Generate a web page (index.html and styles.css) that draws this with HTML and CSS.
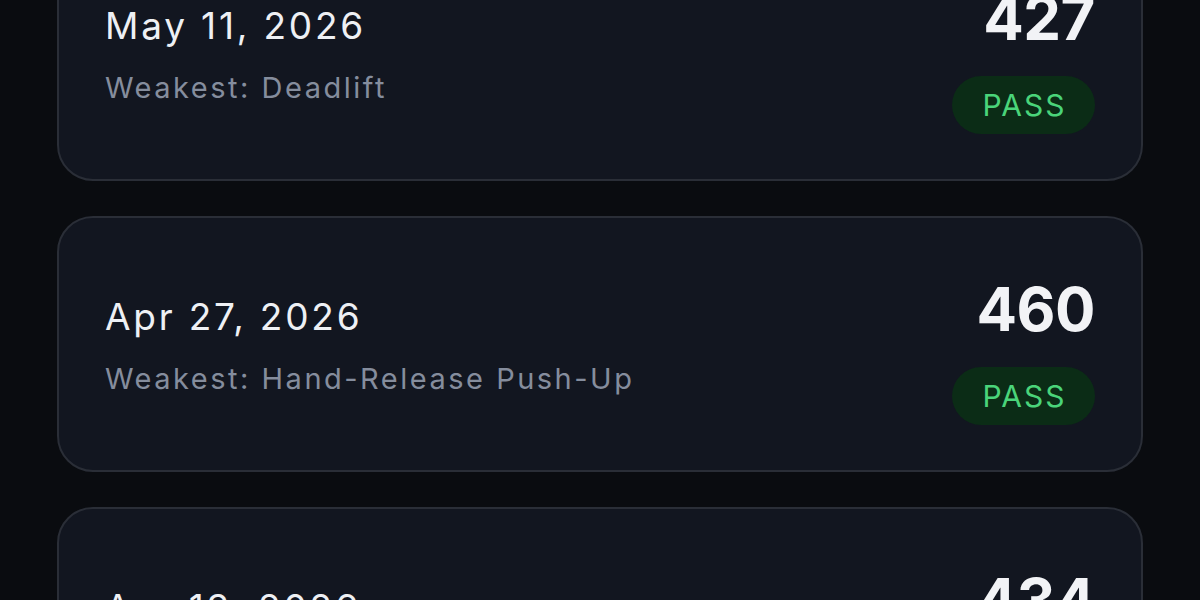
FILE: index.html
```html
<!DOCTYPE html>
<html lang="en">
<head>
<meta charset="utf-8">
<title>Test history</title>
<link rel="stylesheet" href="styles.css">
</head>
<body>
<main class="list">
  <section class="card">
    <div class="info">
      <div class="date">May 11, 2026</div>
      <div class="weak">Weakest: Deadlift</div>
    </div>
    <div class="result">
      <div class="score">427</div>
      <div class="pill">PASS</div>
    </div>
  </section>
  <section class="card">
    <div class="info">
      <div class="date">Apr 27, 2026</div>
      <div class="weak">Weakest: Hand-Release Push-Up</div>
    </div>
    <div class="result">
      <div class="score">460</div>
      <div class="pill">PASS</div>
    </div>
  </section>
  <section class="card">
    <div class="info">
      <div class="date">Apr 13, 2026</div>
      <div class="weak">Weakest: Sprint-Drag-Carry</div>
    </div>
    <div class="result">
      <div class="score">434</div>
      <div class="pill">PASS</div>
    </div>
  </section>
</main>
</body>
</html>
```

FILE: styles.css
```css
html, body {
  margin: 0;
  padding: 0;
  height: 100%;
  overflow: hidden;
  background: #0a0c10;
  font-family: Inter, "Noto Sans", sans-serif;
}

.list {
  display: flex;
  flex-direction: column;
  gap: 35px;
  padding: 0 57px;
  margin-top: -75px;
}

.card {
  box-sizing: border-box;
  height: 256px;
  background: #121620;
  border: 2px solid #2a2e37;
  border-radius: 36px;
  padding: 0 46px 0 46px;
  display: flex;
  align-items: center;
  justify-content: space-between;
}

.info {
  display: flex;
  flex-direction: column;
  gap: 22px;
  margin-top: 2px;
}

.date {
  font-size: 37px;
  line-height: 44px;
  color: #eef0f4;
  font-weight: 400;
  letter-spacing: 2.8px;
}

.weak {
  font-size: 29px;
  line-height: 35px;
  color: #858d9d;
  letter-spacing: 2.5px;
}

.result {
  display: flex;
  flex-direction: column;
  align-items: flex-end;
  gap: 22px;
  margin-top: 10px;
}

.score {
  font-size: 60px;
  line-height: 72px;
  font-weight: 700;
  color: #f2f3f6;
  letter-spacing: -0.5px;
}

.pill {
  box-sizing: border-box;
  width: 143px;
  height: 58px;
  border-radius: 29px;
  background: #0b2c16;
  color: #4ad47a;
  font-size: 30px;
  letter-spacing: 2px;
  padding-left: 2px;
  display: flex;
  align-items: center;
  justify-content: center;
}
```
